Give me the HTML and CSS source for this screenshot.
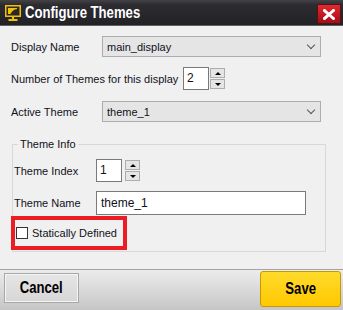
FILE: index.html
```html
<!doctype html>
<html lang="en">
<head>
  <meta charset="utf-8">
  <title>Configure Themes</title>
  <link rel="stylesheet" href="styles.css">
</head>
<body>
<div class="dialog">
  <header class="titlebar">
    <svg class="title-icon" width="16" height="16" viewBox="0 0 16 16">
      <rect x="0.75" y="0.75" width="14.5" height="10.5" fill="none" stroke="#f2c200" stroke-width="1.5"/>
      <path d="M3 3 H12 V4 C9 4.5 7 6 5.5 9 H3 Z" fill="#f2c200"/>
      <rect x="7" y="11.5" width="2" height="2.5" fill="#f2c200"/>
      <rect x="3.5" y="14" width="9" height="2" fill="#f2c200"/>
    </svg>
    <span class="title narrow">Configure Themes</span>
    <button class="close" aria-label="Close">
      <svg width="12" height="11" viewBox="0 0 12 11">
        <path d="M1.5 1.5 L10.5 9.5 M10.5 1.5 L1.5 9.5" stroke="#fff" stroke-width="3" stroke-linecap="square"/>
      </svg>
    </button>
  </header>

  <section class="content">
    <div class="row">
      <label class="lbl">Display Name</label>
      <div class="select"><span>main_display</span><span class="chev"></span></div>
    </div>
    <div class="row row-count">
      <label class="lbl lbl-wide">Number of Themes for this display</label>
      <div class="spin">
        <span class="spin-value">2</span>
        <div class="spin-btns"><span class="spin-btn up"></span><span class="spin-btn down"></span></div>
      </div>
    </div>
    <div class="row row-active">
      <label class="lbl">Active Theme</label>
      <div class="select"><span>theme_1</span><span class="chev"></span></div>
    </div>

    <fieldset class="group">
      <legend>Theme Info</legend>
      <div class="row row-index">
        <label class="lbl lbl-group">Theme Index</label>
        <div class="spin spin-small">
          <span class="spin-value">1</span>
          <div class="spin-btns"><span class="spin-btn up"></span><span class="spin-btn down"></span></div>
        </div>
      </div>
      <div class="row row-name">
        <label class="lbl lbl-group">Theme Name</label>
        <div class="text-input">theme_1</div>
      </div>
      <div class="static">
        <span class="checkbox"></span>
        <span>Statically Defined</span>
      </div>
    </fieldset>
  </section>

  <footer class="footer">
    <button class="btn cancel"><span class="narrow">Cancel</span></button>
    <button class="btn save"><span class="narrow">Save</span></button>
  </footer>
</div>
</body>
</html>
```

FILE: styles.css
```css
* {
  box-sizing: border-box;
  margin: 0;
  padding: 0;
}
body {
  background: #f0f0f0;
  font-family: 'Liberation Sans', Arial, sans-serif;
  font-size: 11px;
  color: #101020;
}
.dialog {
  width: 343px;
  height: 310px;
  display: flex;
  flex-direction: column;
  background: #f0f0f0;
}
/* condensed bold heading face */
.narrow {
  display: inline-block;
  font-family: 'Liberation Sans', Arial, sans-serif;
  font-weight: bold;
  font-size: 16px;
  transform: scaleX(0.82);
}
.titlebar {
  height: 26px;
  display: flex;
  align-items: center;
  background: linear-gradient(#424247, #2b2b30 20%, #222226);
  border-bottom: 1px solid #606064;
}
.title-icon {
  margin-left: 5px;
}
.title {
  margin-left: 4px;
  color: #fff;
  transform-origin: left center;
}
.close {
  margin-left: auto;
  margin-right: 2px;
  align-self: flex-start;
  margin-top: 4px;
  width: 24px;
  height: 20px;
  border: 1px solid #5a1014;
  background: linear-gradient(#dc2a30, #c01820 60%, #9c1018);
  display: flex;
  align-items: center;
  justify-content: center;
}
.content {
  flex: 1;
  padding: 10px 0 0 11px;
}
.row {
  display: flex;
  align-items: center;
  height: 21px;
}
.row-count {
  margin-top: 10px;
  height: 23px;
}
.row-active {
  margin-top: 11px;
}
.lbl {
  width: 91px;
}
.lbl-wide {
  width: 172px;
}
.lbl-group {
  width: 82px;
}
.select {
  width: 219px;
  height: 21px;
  border: 1px solid #adadad;
  background: #e5e5e5;
  display: flex;
  align-items: center;
  padding-left: 4px;
  padding-right: 6px;
}
.chev {
  margin-left: auto;
  width: 6px;
  height: 6px;
  border-right: 1px solid #555;
  border-bottom: 1px solid #555;
  transform: rotate(45deg);
  margin-top: -4px;
}
.spin {
  display: flex;
  gap: 1px;
}
.spin-small {
  gap: 3px;
}
.spin-value {
  width: 26px;
  height: 23px;
  border: 1px solid #7a7a7a;
  background: #fff;
  padding: 3px 0 0 3px;
  font-size: 12px;
}
.spin-btns {
  display: flex;
  flex-direction: column;
  gap: 1px;
  padding-top: 1px;
}
.spin-btn {
  width: 15px;
  height: 10px;
  border: 1px solid #adadad;
  background: #e5e5e5;
  display: flex;
  align-items: center;
  justify-content: center;
}
.spin-btn::before {
  content: '';
  border-left: 3px solid transparent;
  border-right: 3px solid transparent;
}
.spin-btn.up::before {
  border-bottom: 3px solid #000;
}
.spin-btn.down::before {
  border-top: 3px solid #000;
}
.group {
  margin: 15px 0 0 1px;
  width: 314px;
  border: 1px solid #d8d8d8;
  padding: 0 0 1px 1px;
}
.group legend {
  margin-left: 4px;
  padding: 0 2px;
  line-height: 14px;
}
.row-index {
  margin-top: 8px;
  height: 23px;
}
.row-name {
  margin-top: 9px;
  height: 24px;
}
.text-input {
  width: 210px;
  height: 24px;
  border: 1px solid #7a7a7a;
  background: #fff;
  padding-left: 4px;
  display: flex;
  align-items: center;
  font-size: 12px;
}
.static {
  margin: 1px 0 0 -3px;
  width: 116px;
  height: 34px;
  border: 4px solid #ec1c24;
  display: flex;
  align-items: center;
  gap: 4px;
  padding-left: 1px;
}
.checkbox {
  width: 12px;
  height: 12px;
  border: 1px solid #333;
  background: #fff;
}
.footer {
  height: 41px;
  border-top: 1px solid #a4a4a4;
  background: linear-gradient(#ececec, #c6c6c6);
  display: flex;
  justify-content: space-between;
  align-items: flex-start;
  padding: 0 2px 0 4px;
}
.btn {
  color: #000;
  cursor: pointer;
  display: flex;
  align-items: center;
  justify-content: center;
}
.cancel {
  margin-top: 3px;
  width: 75px;
  height: 30px;
  border: 1px solid #a8a8a8;
  box-shadow: inset 0 0 0 1px #f4f4f4;
  background: linear-gradient(#e6e6e6, #d6d6d6);
}
.save {
  margin-top: 1px;
  width: 81px;
  height: 36px;
  border: 1px solid #c49a00;
  border-radius: 3px;
  background: linear-gradient(#ffdb2c, #ffc800);
}
```
